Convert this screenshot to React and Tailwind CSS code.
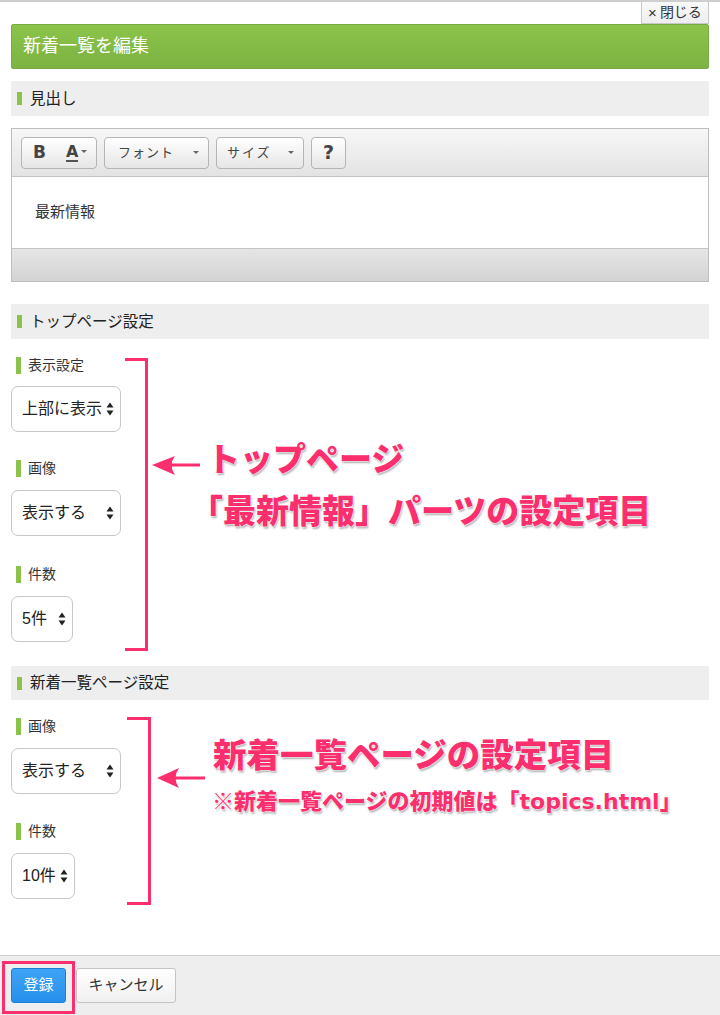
import React from "react";

const FONT = "font-['Liberation_Sans','Noto_Sans_CJK_JP',sans-serif]";

function Caret() {
  return (
    <span className="inline-block w-0 h-0 border-l-[3px] border-r-[3px] border-t-[3px] border-l-transparent border-r-transparent border-t-[#666]" />
  );
}

function UpDown() {
  return (
    <svg width="8" height="14" viewBox="0 0 8 14" className="shrink-0">
      <path d="M4 0.5 L7.5 5.5 L0.5 5.5 Z" fill="#222" />
      <path d="M4 13.5 L7.5 8.5 L0.5 8.5 Z" fill="#222" />
    </svg>
  );
}

function SectionBar({ children, h }) {
  return (
    <div className={`${h} bg-[#eeeeee] flex items-center pl-[6px] gap-[8px]`}>
      <span className="w-[5px] h-[13px] bg-[#8bc34a]" />
      <span className="text-[15.5px] text-[#222]">{children}</span>
    </div>
  );
}

function SubLabel({ children, className }) {
  return (
    <div className={`flex items-center h-[17px] pl-[5px] gap-[7px] ${className}`}>
      <span className="w-[5px] h-[17px] bg-[#8bc34a]" />
      <span className="text-[14px] text-[#333]">{children}</span>
    </div>
  );
}

function Select({ children, w, className }) {
  return (
    <div
      className={`${w} h-[46px] border border-[#c8c8c8] rounded-[7px] bg-white flex items-center justify-between pl-[10px] pr-[6px] text-[16px] text-[#222] ${className}`}
    >
      <span>{children}</span>
      <UpDown />
    </div>
  );
}

function ToolBtn({ className, children }) {
  return (
    <div
      className={`h-[32px] border border-[#b5b5b5] rounded-[4px] bg-linear-to-b from-[#ffffff] to-[#e6e6e6] flex items-center text-[#444] ${className}`}
    >
      {children}
    </div>
  );
}

export default function App() {
  const shadow =
    "[text-shadow:0_0_1px_#fff,0_0_2px_#fff,0_0_2px_#fff,1px_2px_2px_rgba(0,0,0,0.35)]";
  return (
    <div className={`relative min-h-[1015px] flex flex-col bg-white border-t-2 border-[#cfcfcf] ${FONT}`}>
      <div className="h-[22px] flex justify-end pr-[11px]">
        <div className="h-[22px] w-[68px] border border-[#c8c8c8] border-t-0 bg-linear-to-b from-[#fafafa] to-[#eeeeee] flex items-center justify-center text-[14px] text-[#333] gap-[3px]">
          <span className="text-[15px] leading-none">×</span>
          <span>閉じる</span>
        </div>
      </div>

      <div className="px-[11px]">
        <div className="h-[45px] rounded-[2px] border border-[#78ab44] bg-linear-to-b from-[#8cc34b] to-[#7cb342] flex items-center pl-[11px] text-[18px] text-white">
          新着一覧を編集
        </div>

        <div className="mt-[12px]">
          <SectionBar h="h-[35px]">見出し</SectionBar>
        </div>

        <div className="mt-[12px] border border-[#bdbdbd]">
          <div className="h-[48px] bg-linear-to-b from-[#f7f7f7] to-[#e3e3e3] border-b border-[#c4c4c4] flex items-center gap-[7px] pl-[9px]">
            <ToolBtn className="w-[76px] pl-[11px]">
              <span className="text-[17px] font-bold font-['DejaVu_Sans',sans-serif] text-[#444]">B</span>
              <span className="ml-[20px] text-[16px] font-bold font-['DejaVu_Sans',sans-serif] text-[#444] leading-[16px] border-b-2 border-[#555]">A</span>
              <span className="ml-[3px] mb-[2px] flex"><Caret /></span>
            </ToolBtn>
            <ToolBtn className="w-[105px] pl-[13px] pr-[9px] justify-between">
              <span className="text-[13px] tracking-[1px]">フォント</span>
              <Caret />
            </ToolBtn>
            <ToolBtn className="w-[88px] pl-[10px] pr-[9px] justify-between">
              <span className="text-[13px] tracking-[2px]">サイズ</span>
              <Caret />
            </ToolBtn>
            <ToolBtn className="w-[35px] justify-center">
              <span className="text-[19px] font-bold font-['DejaVu_Sans',sans-serif] text-[#444]">?</span>
            </ToolBtn>
          </div>
          <div className="h-[71px] bg-white flex items-center pl-[23px] text-[15px] text-[#333]">
            最新情報
          </div>
          <div className="h-[33px] bg-linear-to-b from-[#e6e6e6] to-[#d3d3d3] border-t border-[#c4c4c4]" />
        </div>

        <div className="mt-[22px]">
          <SectionBar h="h-[35px]">トップページ設定</SectionBar>
        </div>

        <div className="pt-[18px]">
          <SubLabel>表示設定</SubLabel>
          <Select w="w-[110px]" className="mt-[12px]">上部に表示</Select>
          <SubLabel className="mt-[28px]">画像</SubLabel>
          <Select w="w-[110px]" className="mt-[13px]">表示する</Select>
          <SubLabel className="mt-[30px]">件数</SubLabel>
          <Select w="w-[62px]" className="mt-[13px]">5件</Select>
        </div>

        <div className="mt-[24px]">
          <SectionBar h="h-[34px]">新着一覧ページ設定</SectionBar>
        </div>

        <div className="pt-[18px]">
          <SubLabel>画像</SubLabel>
          <Select w="w-[110px]" className="mt-[13px]">表示する</Select>
          <SubLabel className="mt-[29px]">件数</SubLabel>
          <Select w="w-[64px]" className="mt-[13px]">10件</Select>
        </div>
      </div>

      <div className="flex-1" />

      <div className="h-[60px] border-t border-[#cccccc] bg-[#eeeeee] pt-[12px] pl-[11px] flex items-start gap-[10px]">
        <div className="h-[35px] w-[55px] rounded-[3px] border border-[#1b7fd6] bg-linear-to-b from-[#3ea3f5] to-[#2590ec] text-white text-[15px] flex items-center justify-center">
          登録
        </div>
        <div className="h-[35px] w-[100px] rounded-[3px] border border-[#c4c4c4] bg-linear-to-b from-[#ffffff] to-[#f0f0f0] text-[#333] text-[15px] flex items-center justify-center">
          キャンセル
        </div>
      </div>

      {/* annotation layer */}
      <div className="absolute inset-0 pointer-events-none">
        <svg width="720" height="1015" className="absolute left-0 top-0">
          <g fill="none" stroke="#fb2f6e" strokeWidth="3">
            <path d="M125 357.5 H146.5 V647.5 H125" />
            <path d="M127 716.5 H149.5 V901.5 H127" />
            <path d="M200 463 H170" />
            <path d="M205 776 H175" />
            <rect x="3.5" y="960.5" width="70" height="50" />
          </g>
          <g fill="#fb2f6e">
            <path d="M152 463 L175 454 Q168 463 175 473 Z" />
            <path d="M157 776 L179 766 Q172 776 179 786 Z" />
          </g>
        </svg>
        <div className={`absolute left-[207px] top-[439px] text-[33px] font-black leading-none text-[#fb2f6e] whitespace-nowrap font-['Noto_Sans_CJK_JP',sans-serif] ${shadow}`}>
          トップページ
        </div>
        <div className={`absolute left-[190px] top-[491px] text-[33px] font-black leading-none text-[#fb2f6e] whitespace-nowrap font-['Noto_Sans_CJK_JP',sans-serif] ${shadow}`}>
          「最新情報」パーツの設定項目
        </div>
        <div className={`absolute left-[213px] top-[734px] text-[33.5px] font-black leading-none text-[#fb2f6e] whitespace-nowrap font-['Noto_Sans_CJK_JP',sans-serif] ${shadow}`}>
          新着一覧ページの設定項目
        </div>
        <div className={`absolute left-[212px] top-[786px] text-[22px] font-black leading-none text-[#fb2f6e] whitespace-nowrap font-['Noto_Sans_CJK_JP',sans-serif] ${shadow}`}>
          ※新着一覧ページの初期値は「<span className="font-['DejaVu_Sans',sans-serif] font-bold">topics.html</span>」
        </div>
      </div>
    </div>
  );
}
